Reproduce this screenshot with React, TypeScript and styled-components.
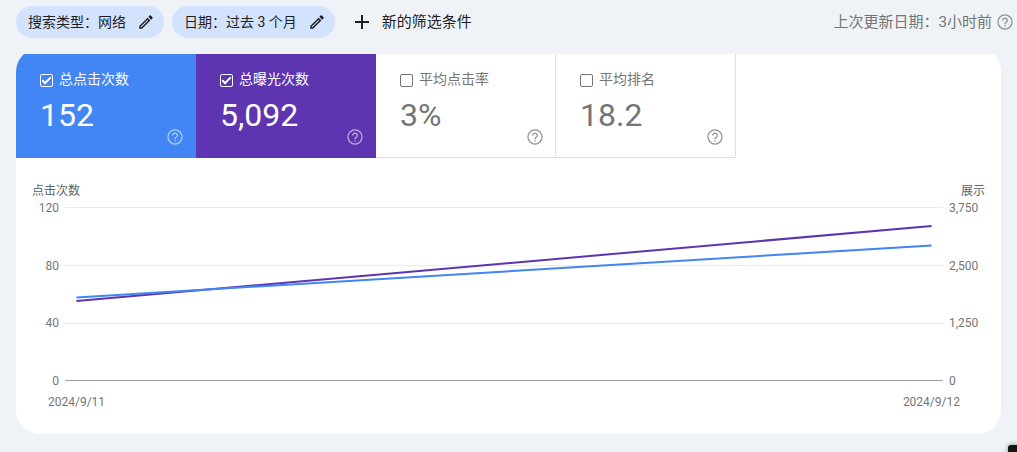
import React from "react";
import styled, { createGlobalStyle } from "styled-components";

const GlobalStyle = createGlobalStyle`
  *, *::before, *::after { box-sizing: border-box; }
  body {
    margin: 0;
    background: #eff3f8;
    font-family: Roboto, "Noto Sans CJK SC", sans-serif;
    font-weight: 400;
    color: #1f1f1f;
  }
  button, input { font: inherit; color: inherit; margin: 0; }
`;

const Page = styled.main`
  padding: 6px 16px 18px;
`;

const Toolbar = styled.header`
  display: flex;
  align-items: center;
  height: 32px;
  margin: 0 -13px 16px 0;
`;

const Chip = styled.button`
  display: flex;
  align-items: center;
  gap: 11px;
  height: 32px;
  margin-right: 8px;
  padding: 0 9px 0 12px;
  border: 0;
  border-radius: 16px;
  background: #d3e3fd;
  font-size: 14px;
  line-height: 20px;
  white-space: nowrap;
`;

const AddFilter = styled.button`
  display: flex;
  align-items: center;
  gap: 10px;
  height: 32px;
  padding: 0 9px;
  border: 0;
  background: none;
  font-size: 15px;
  line-height: 20px;
  white-space: nowrap;
`;

const Updated = styled.div`
  display: flex;
  align-items: center;
  gap: 4px;
  margin-left: auto;
  font-size: 15px;
  line-height: 20px;
  color: #757575;
  white-space: nowrap;
`;

const HelpButton = styled.button`
  display: flex;
  padding: 0;
  border: 0;
  background: none;
  opacity: 0.8;
`;

const Viewport = styled.div`
  overflow: hidden;
`;

const Card = styled.section`
  margin-top: -6px;
  padding-top: 6px;
  border-radius: 24px;
  background: #fff;
  overflow: hidden;
`;

const Metrics = styled.div`
  display: flex;
`;

const Metric = styled.div<{ $fill?: string }>`
  display: flex;
  flex-direction: column;
  width: 180px;
  height: 104px;
  padding: 15px 11px 11px 24px;
  background: ${(p) => p.$fill ?? "#fff"};
  color: ${(p) => (p.$fill ? "#fff" : "#757575")};
  border: solid ${(p) => p.$fill ?? "#e0e0e0"};
  border-width: 0 1px 1px 0;
`;

const MetricLabel = styled.label`
  display: flex;
  align-items: center;
  gap: 6px;
  font-size: 14px;
  line-height: 20px;
`;

const Check = styled.input`
  appearance: none;
  display: grid;
  place-items: center;
  width: 13px;
  height: 13px;
  margin-top: 2px;
  border: 1px solid currentColor;
  border-radius: 2px;

  &:checked::before {
    content: "";
    width: 9px;
    height: 5px;
    margin-top: -2px;
    border: solid currentColor;
    border-width: 0 0 2px 2px;
    transform: rotate(-45deg);
  }
`;

const MetricBottom = styled.div`
  display: flex;
  justify-content: space-between;
  align-items: flex-end;
  margin-top: 5px;
`;

const MetricValue = styled.div`
  height: 42px;
  font-size: 32px;
  line-height: 42px;
`;

const MetricHelp = styled(HelpButton)<{ $soft?: boolean }>`
  opacity: ${(p) => (p.$soft ? 0.6 : 0.8)};
  margin-bottom: -10px;
`;

const Chart = styled.figure`
  margin: 0;
  padding: 23px 16px 22px;
  font-size: 12px;
  line-height: 20px;
  color: #757575;
`;

const AxisTitles = styled.div`
  display: flex;
  justify-content: space-between;
  color: #5f6368;
`;

const PlotRow = styled.div`
  display: grid;
  grid-template-columns: 27px 1fr 36px;
  column-gap: 6px;
  margin-top: -3px;
`;

const Scale = styled.div<{ $align: "left" | "right" }>`
  display: flex;
  flex-direction: column;
  justify-content: space-between;
  height: 193px;
  text-align: ${(p) => p.$align};
`;

const Plot = styled.svg`
  display: block;
  width: 100%;
  height: 193px;
`;

const Dates = styled.div`
  display: flex;
  justify-content: space-between;
  margin-top: 1px;
  padding: 0 25px 0 16px;
`;

const Launcher = styled.div`
  position: fixed;
  right: -31px;
  bottom: -33px;
  width: 40px;
  height: 40px;
  border-radius: 3px;
  background: #151515;
  box-shadow: 0 0 5px #8a8a8a;
`;

const PencilIcon = () => (
  <svg width="18" height="18" viewBox="0 0 24 24" fill="currentColor" aria-hidden="true">
    <path d="M14.06 9.02l.92.92L5.92 19H5v-.92l9.06-9.06M17.66 3c-.25 0-.51.1-.7.29l-1.83 1.83 3.75 3.75 1.83-1.83c.39-.39.39-1.02 0-1.41l-2.34-2.34c-.2-.2-.45-.29-.71-.29zm-3.6 3.19L3 17.25V21h3.75L17.81 9.94l-3.75-3.75z" />
  </svg>
);

const PlusIcon = () => (
  <svg width="20" height="20" viewBox="0 0 20 20" stroke="currentColor" strokeWidth="2" aria-hidden="true">
    <path d="M10 3v14M3 10h14" />
  </svg>
);

const HelpIcon = () => (
  <svg width="18" height="18" viewBox="0 0 24 24" fill="currentColor" aria-hidden="true">
    <circle cx="12" cy="12" r="9.4" fill="none" stroke="currentColor" strokeWidth="1.6" />
    <path d="M11.1 16.2h1.8v1.8h-1.8zM12 6c-2.21 0-4 1.79-4 4h1.7c0-1.3 1-2.4 2.3-2.4s2.3 1 2.3 2.4c0 2-3.1 1.75-3.1 5h1.7c0-2.25 3.1-2.5 3.1-5 0-2.21-1.79-4-4-4z" />
  </svg>
);

const metrics = [
  { id: "clicks", label: "总点击次数", value: "152", fill: "#4285f4" },
  { id: "impressions", label: "总曝光次数", value: "5,092", fill: "#5e35b1" },
  { id: "ctr", label: "平均点击率", value: "3%" },
  { id: "position", label: "平均排名", value: "18.2" },
];

const filters = ["搜索类型：网络", "日期：过去 3 个月"];
const clickTicks = ["120", "80", "40", "0"];
const impressionTicks = ["3,750", "2,500", "1,250", "0"];
const gridLines = [10, 68, 126];

export default function App() {
  return (
    <>
      <GlobalStyle />
      <Page>
        <Toolbar>
          {filters.map((text) => (
            <Chip key={text} type="button">
              {text}
              <PencilIcon />
            </Chip>
          ))}
          <AddFilter type="button">
            <PlusIcon />
            新的筛选条件
          </AddFilter>
          <Updated>
            上次更新日期：3小时前
            <HelpButton type="button" aria-label="帮助">
              <HelpIcon />
            </HelpButton>
          </Updated>
        </Toolbar>
        <Viewport>
          <Card>
            <Metrics>
              {metrics.map((m) => (
                <Metric key={m.id} $fill={m.fill}>
                  <MetricLabel htmlFor={m.id}>
                    <Check id={m.id} type="checkbox" defaultChecked={Boolean(m.fill)} />
                    {m.label}
                  </MetricLabel>
                  <MetricBottom>
                    <MetricValue>{m.value}</MetricValue>
                    <MetricHelp type="button" aria-label="帮助" $soft={Boolean(m.fill)}>
                      <HelpIcon />
                    </MetricHelp>
                  </MetricBottom>
                </Metric>
              ))}
            </Metrics>
            <Chart>
              <AxisTitles>
                <span>点击次数</span>
                <span>展示</span>
              </AxisTitles>
              <PlotRow>
                <Scale $align="right">
                  {clickTicks.map((t) => (
                    <span key={t}>{t}</span>
                  ))}
                </Scale>
                <Plot role="img" aria-label="点击次数 展示">
                  {gridLines.map((y) => (
                    <rect key={y} x="0" y={y - 1} width="100%" height="1" fill="#ebebeb" />
                  ))}
                  <rect x="0" y="182" width="100%" height="1" fill="#9e9e9e" />
                  <line x1="1.3%" y1="103" x2="98.7%" y2="28" stroke="#5e35b1" strokeWidth="2" />
                  <line x1="1.3%" y1="99.5" x2="98.7%" y2="47.5" stroke="#4285f4" strokeWidth="2" />
                </Plot>
                <Scale $align="left">
                  {impressionTicks.map((t) => (
                    <span key={t}>{t}</span>
                  ))}
                </Scale>
              </PlotRow>
              <Dates>
                <span>2024/9/11</span>
                <span>2024/9/12</span>
              </Dates>
            </Chart>
          </Card>
        </Viewport>
      </Page>
      <Launcher />
    </>
  );
}
